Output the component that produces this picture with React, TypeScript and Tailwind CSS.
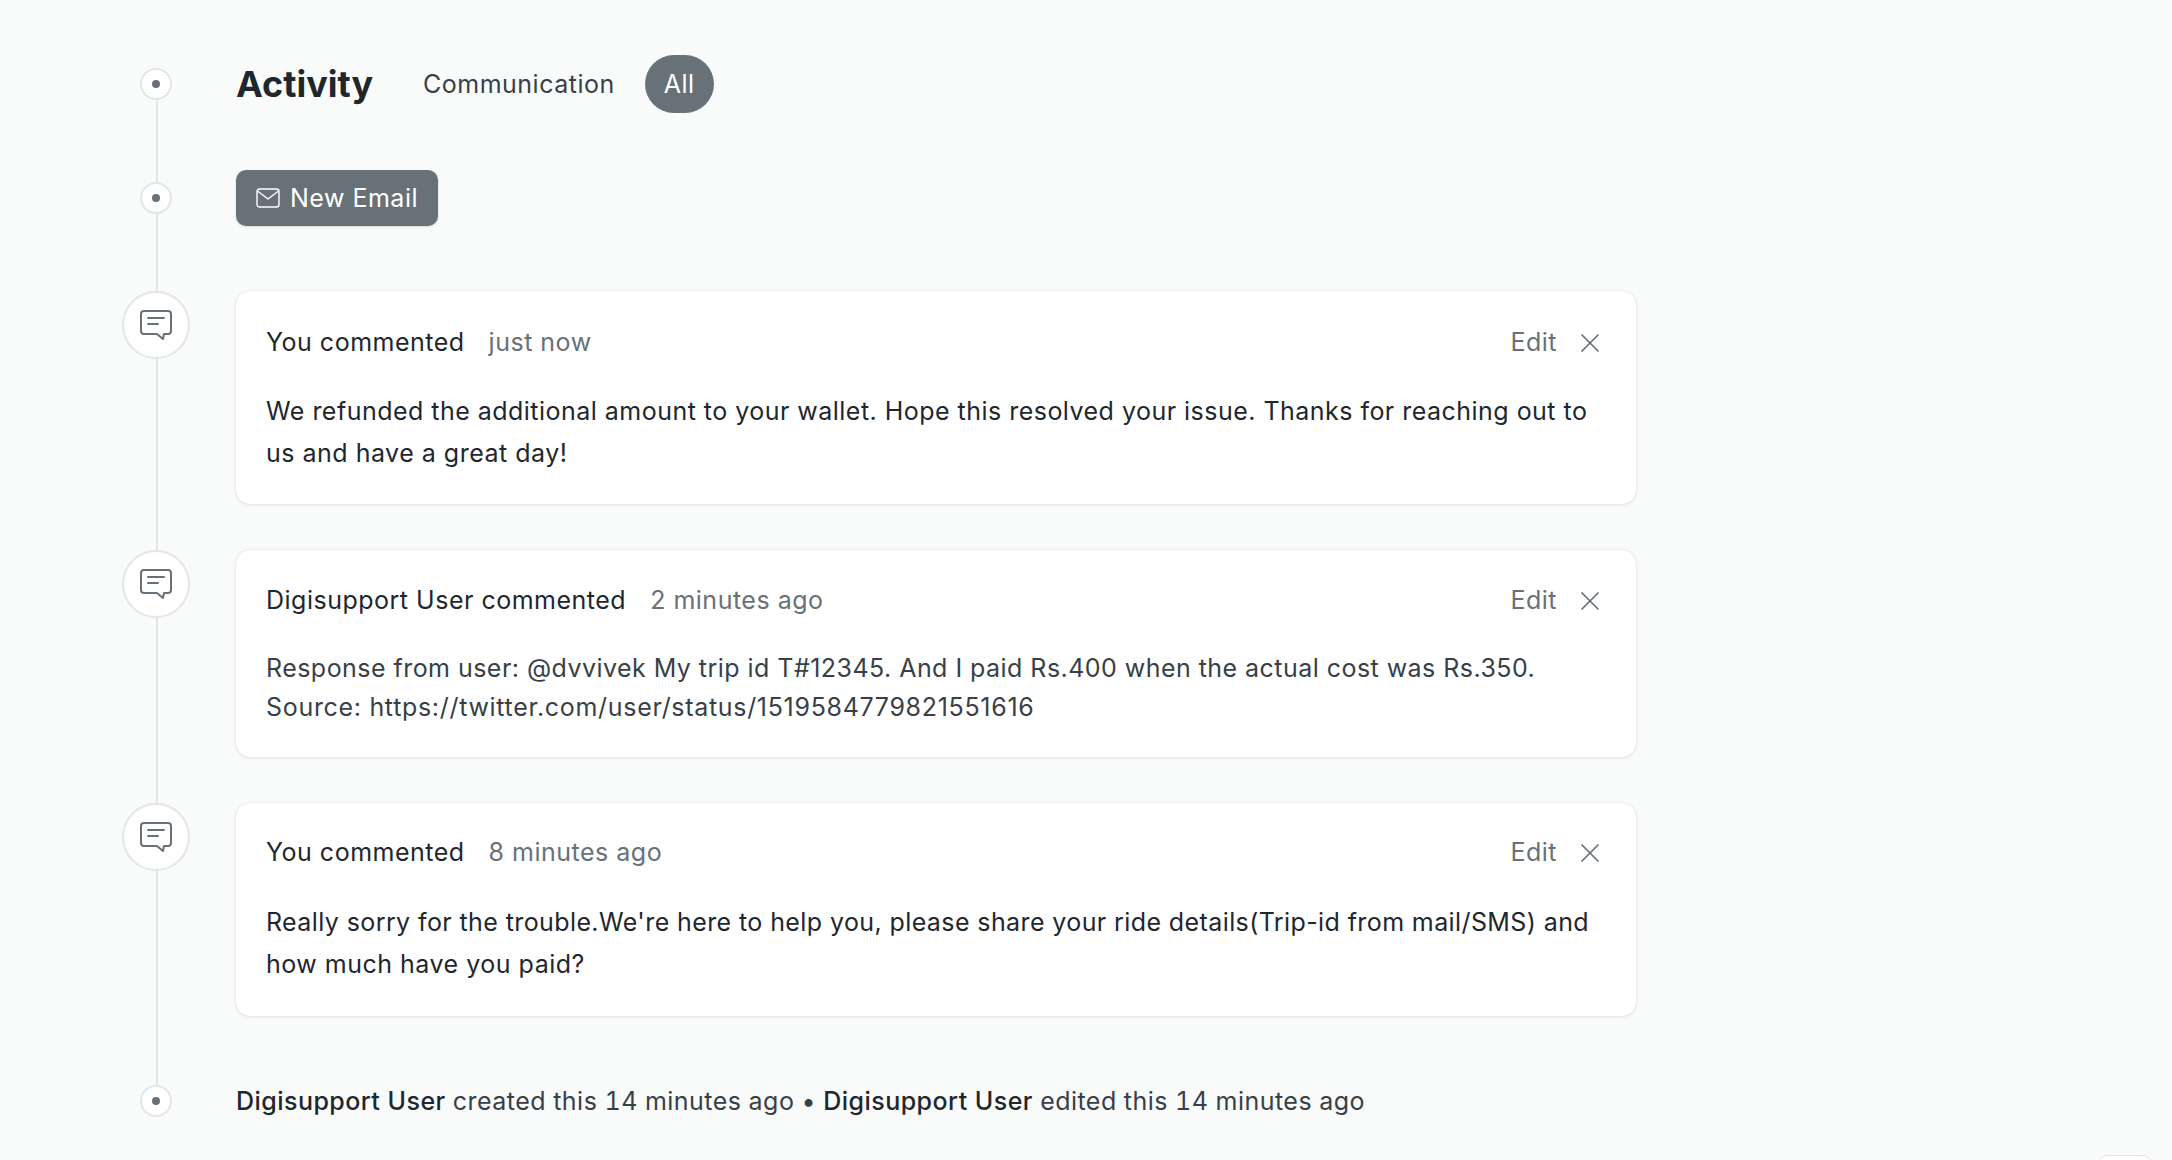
import React from 'react';
import { X } from 'lucide-react';

interface CommentLine {
  text: string;
  className: string;
}

interface CommentItem {
  author: string;
  time: string;
  lines: CommentLine[];
  lineClass: string;
  bodyClass: string;
  cardClass: string;
}

const comments: CommentItem[] = [
  {
    author: 'You commented',
    time: 'just now',
    lines: [
      {
        text: 'We refunded the additional amount to your wallet. Hope this resolved your issue. Thanks for reaching out to',
        className: 'tracking-[0.019em]',
      },
      { text: 'us and have a great day!', className: '' },
    ],
    lineClass: 'leading-[42px] mt-[26px]',
    bodyClass: 'text-[#1f272e]',
    cardClass: 'h-[213px] pt-[31px]',
  },
  {
    author: 'Digisupport User commented',
    time: '2 minutes ago',
    lines: [
      {
        text: 'Response from user: @dvvivek My trip id T#12345. And I paid Rs.400 when the actual cost was Rs.350.',
        className: 'tracking-[0.0184em]',
      },
      {
        text: 'Source: https://twitter.com/user/status/1519584779821551616',
        className: 'tracking-[0.0275em]',
      },
    ],
    lineClass: 'leading-[39px] mt-[27px]',
    bodyClass: 'text-[#383f46]',
    cardClass: 'h-[207px] pt-[30px]',
  },
  {
    author: 'You commented',
    time: '8 minutes ago',
    lines: [
      {
        text: "Really sorry for the trouble.We're here to help you, please share your ride details(Trip-id from mail/SMS) and",
        className: 'tracking-[0.016em]',
      },
      { text: 'how much have you paid?', className: '' },
    ],
    lineClass: 'leading-[42px] mt-[27px]',
    bodyClass: 'text-[#1f272e]',
    cardClass: 'h-[213px] pt-[29px]',
  },
];

const Dot = () => (
  <div className="w-[32px] h-[32px] rounded-full bg-white border-2 border-[#e2e6e9] flex items-center justify-center">
    <div className="w-[8px] h-[8px] rounded-full bg-[#687178]" />
  </div>
);

const CommentIcon = () => (
  <svg width="34" height="32" viewBox="0 0 34 32" fill="none" stroke="#687178" strokeWidth="2" strokeLinecap="round" strokeLinejoin="round">
    <path d="M5 2h24a3 3 0 0 1 3 3v17a3 3 0 0 1-3 3h-4l-1 5-6-5H5a3 3 0 0 1-3-3V5a3 3 0 0 1 3-3z" />
    <path d="M9 9h16M9 15h10" />
  </svg>
);

const MailIcon = () => (
  <svg width="24" height="20" viewBox="0 0 24 20" fill="none" stroke="currentColor" strokeWidth="1.4" strokeLinecap="round" strokeLinejoin="round">
    <rect x="1" y="1" width="22" height="18" rx="2.5" />
    <path d="M1.5 3l10.5 8 10.5-8" />
  </svg>
);

const App: React.FC = () => {
  return (
    <div
      className="min-h-[1160px] h-[1160px] overflow-hidden bg-[#f9fafa] text-[25px] tracking-[0.02em] text-[#1f272e]"
      style={{ fontFamily: 'Inter, "Liberation Sans", sans-serif' }}
    >
      <div className="relative pl-[122px] pt-[55px]">
        {/* 时间线竖线 */}
        <div className="absolute left-[156px] top-[95px] h-[995px] w-[2px] bg-[#e2e6e9]" />

        {/* 标题行 */}
        <div className="relative flex items-center h-[58px]">
          <div className="w-[68px] flex justify-center">
            <Dot />
          </div>
          <div className="ml-[46px] flex items-center">
            <h1 className="text-[36px] font-bold tracking-normal w-[135px] whitespace-nowrap">Activity</h1>
            <span className="ml-[52px] pt-[2px] text-[#383f46]">Communication</span>
            <span className="ml-[30px] w-[69px] h-[58px] pt-[2px] rounded-full bg-[#687178] text-white flex items-center justify-center">
              All
            </span>
          </div>
        </div>

        {/* 新邮件 */}
        <div className="relative flex items-center h-[56px] mt-[57px]">
          <div className="w-[68px] flex justify-center">
            <Dot />
          </div>
          <button className="ml-[46px] w-[202px] h-[56px] rounded-[10px] bg-[#687178] text-white flex items-center justify-center gap-[10px] shadow-sm whitespace-nowrap">
            <MailIcon />
            <span className="pt-[1px]">New Email</span>
          </button>
        </div>

        {/* 评论列表 */}
        <div className="mt-[65px] flex flex-col gap-[46px]">
          {comments.map((c, i) => (
            <div key={i} className="relative flex items-start">
              <div className="w-[68px] h-[68px] rounded-full bg-white border-2 border-[#e2e6e9] flex items-center justify-center shrink-0">
                <CommentIcon />
              </div>
              <div className={`ml-[46px] w-[1400px] ${c.cardClass} bg-white rounded-[14px] shadow-[0_0_1px_rgba(0,0,0,0.2),0_1px_4px_rgba(0,0,0,0.08)] pl-[30px] pr-[30px]`}>
                <div className="flex items-center h-[42px]">
                  <span>{c.author}</span>
                  <span className="ml-[24px] text-[#687178]">{c.time}</span>
                  <span className="ml-auto text-[#687178]">Edit</span>
                  <X size={32} strokeWidth={1.3} className="ml-[17px] text-[#687178]" />
                </div>
                <div className={`${c.lineClass} ${c.bodyClass}`}>
                  {c.lines.map((line) => (
                    <div key={line.text} className={`whitespace-nowrap ${line.className}`}>{line.text}</div>
                  ))}
                </div>
              </div>
            </div>
          ))}
        </div>

        {/* 底部 */}
        <div className="relative flex items-center h-[30px] mt-[70px]">
          <div className="w-[68px] flex justify-center">
            <Dot />
          </div>
          <div className="ml-[46px] pt-[1px] text-[#383f46] whitespace-nowrap tabular-nums tracking-[0.0185em]">
            <span className="font-medium text-[#1f272e]">Digisupport User</span> created this 14 minutes ago •{' '}
            <span className="font-medium text-[#1f272e]">Digisupport User</span> edited this 14 minutes ago
          </div>
        </div>
      </div>

      {/* 右下角露出的按钮边 */}
      <div className="fixed right-[20px] top-[1155px] w-[55px] h-[40px] rounded-[10px] bg-white border border-[#e2e6e9]" />
    </div>
  );
};

export default App;
